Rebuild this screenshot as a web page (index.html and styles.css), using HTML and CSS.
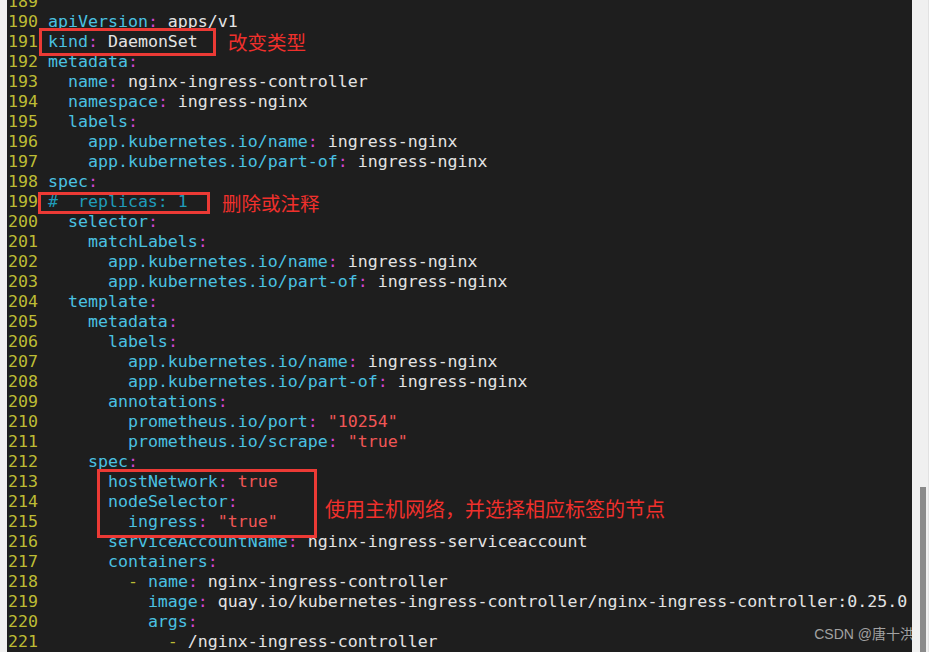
FILE: index.html
```html
<!DOCTYPE html>
<html lang="en">
<head>
    <meta charset="UTF-8">
    <title>nginx-ingress-controller</title>
    <link rel="stylesheet" href="styles.css">
</head>
<body>
<div class="window">
    <div class="edge"></div>
    <div class="editor">
        <div class="code">
            <div class="line"><span class="num">189 </span></div>
            <div class="line"><span class="num">190 </span><span class="k">apiVersion</span><span class="p">:</span> apps/v1</div>
            <div class="line"><span class="num">191 </span><span class="k">kind</span><span class="p">:</span> DaemonSet</div>
            <div class="line"><span class="num">192 </span><span class="k">metadata</span><span class="p">:</span></div>
            <div class="line"><span class="num">193 </span>  <span class="k">name</span><span class="p">:</span> nginx-ingress-controller</div>
            <div class="line"><span class="num">194 </span>  <span class="k">namespace</span><span class="p">:</span> ingress-nginx</div>
            <div class="line"><span class="num">195 </span>  <span class="k">labels</span><span class="p">:</span></div>
            <div class="line"><span class="num">196 </span>    <span class="k">app.kubernetes.io/name</span><span class="p">:</span> ingress-nginx</div>
            <div class="line"><span class="num">197 </span>    <span class="k">app.kubernetes.io/part-of</span><span class="p">:</span> ingress-nginx</div>
            <div class="line"><span class="num">198 </span><span class="k">spec</span><span class="p">:</span></div>
            <div class="line"><span class="num">199 </span><span class="c">#  replicas: 1</span></div>
            <div class="line"><span class="num">200 </span>  <span class="k">selector</span><span class="p">:</span></div>
            <div class="line"><span class="num">201 </span>    <span class="k">matchLabels</span><span class="p">:</span></div>
            <div class="line"><span class="num">202 </span>      <span class="k">app.kubernetes.io/name</span><span class="p">:</span> ingress-nginx</div>
            <div class="line"><span class="num">203 </span>      <span class="k">app.kubernetes.io/part-of</span><span class="p">:</span> ingress-nginx</div>
            <div class="line"><span class="num">204 </span>  <span class="k">template</span><span class="p">:</span></div>
            <div class="line"><span class="num">205 </span>    <span class="k">metadata</span><span class="p">:</span></div>
            <div class="line"><span class="num">206 </span>      <span class="k">labels</span><span class="p">:</span></div>
            <div class="line"><span class="num">207 </span>        <span class="k">app.kubernetes.io/name</span><span class="p">:</span> ingress-nginx</div>
            <div class="line"><span class="num">208 </span>        <span class="k">app.kubernetes.io/part-of</span><span class="p">:</span> ingress-nginx</div>
            <div class="line"><span class="num">209 </span>      <span class="k">annotations</span><span class="p">:</span></div>
            <div class="line"><span class="num">210 </span>        <span class="k">prometheus.io/port</span><span class="p">:</span> <span class="s">"10254"</span></div>
            <div class="line"><span class="num">211 </span>        <span class="k">prometheus.io/scrape</span><span class="p">:</span> <span class="s">"true"</span></div>
            <div class="line"><span class="num">212 </span>    <span class="k">spec</span><span class="p">:</span></div>
            <div class="line"><span class="num">213 </span>      <span class="k">hostNetwork</span><span class="p">:</span> <span class="s">true</span></div>
            <div class="line"><span class="num">214 </span>      <span class="k">nodeSelector</span><span class="p">:</span></div>
            <div class="line"><span class="num">215 </span>        <span class="k">ingress</span><span class="p">:</span> <span class="s">"true"</span></div>
            <div class="line"><span class="num">216 </span>      <span class="k">serviceAccountName</span><span class="p">:</span> nginx-ingress-serviceaccount</div>
            <div class="line"><span class="num">217 </span>      <span class="k">containers</span><span class="p">:</span></div>
            <div class="line"><span class="num">218 </span>        <span class="d">-</span> <span class="k">name</span><span class="p">:</span> nginx-ingress-controller</div>
            <div class="line"><span class="num">219 </span>          <span class="k">image</span><span class="p">:</span> quay.io/kubernetes-ingress-controller/nginx-ingress-controller:0.25.0</div>
            <div class="line"><span class="num">220 </span>          <span class="k">args</span><span class="p">:</span></div>
            <div class="line"><span class="num">221 </span>            <span class="d">-</span> /nginx-ingress-controller</div>
        </div>

        <!-- annotations drawn over the code -->
        <div class="mark mark-kind"></div>
        <div class="note note-kind">改变类型</div>
        <div class="mark mark-replicas"></div>
        <div class="note note-replicas">删除或注释</div>
        <div class="mark mark-host"></div>
        <div class="note note-host">使用主机网络，并选择相应标签的节点</div>
        <div class="watermark">CSDN @唐十洪</div>
    </div>
    <div class="scrollbar">
        <div class="thumb"></div>
    </div>
</div>
</body>
</html>
```

FILE: styles.css
```css
body,html{
    margin: 0;
    padding: 0;
    width: 100%;
    height: 100%;
    overflow: hidden;
    background-color: #1e1e1e;
}
.window{
    display: flex;
    width: 100%;
    height: 100%;
}
.edge{
    width: 7px;
    flex-shrink: 0;
    background-color: #f0f0f0;
}
.editor{
    flex: 1;
    position: relative;
    overflow: hidden;
    background-color: #1e1e1e;
    padding-left: 1px;
}
.code{
    margin-top: -8px;
    font-family: "DejaVu Sans Mono", "Liberation Mono", monospace;
    font-size: 16.6px;
    line-height: 20px;
    color: #e4e4e4;
}
.line{
    height: 20px;
    white-space: pre;
}
.num{
    color: #bdbc34;
}
.k{
    color: #4ac2e2;
}
.p{
    color: #d246d2;
}
.s{
    color: #f05656;
}
.c{
    color: #1f9cba;
}
.d{
    color: #bdbc34;
}
.mark{
    position: absolute;
    border: 3px solid #ec3a35;
    box-sizing: border-box;
}
.mark-kind{
    left: 32px;
    top: 28px;
    width: 177px;
    height: 28px;
}
.mark-replicas{
    left: 31px;
    top: 192px;
    width: 172px;
    height: 22px;
}
.mark-host{
    left: 90px;
    top: 469px;
    width: 220px;
    height: 69px;
}
.note{
    position: absolute;
    font-family: "Noto Sans CJK SC", sans-serif;
    font-size: 19.5px;
    line-height: 24px;
    color: #f0302c;
    white-space: nowrap;
}
.note-kind{
    left: 221px;
    top: 30px;
}
.note-replicas{
    left: 215px;
    top: 191px;
}
.note-host{
    left: 318px;
    top: 497px;
    font-size: 20px;
}
.watermark{
    position: absolute;
    right: -2px;
    top: 624px;
    font-family: "Liberation Sans", "Noto Sans CJK SC", sans-serif;
    font-size: 14px;
    line-height: 20px;
    color: #a2a2a2;
    white-space: nowrap;
}
.scrollbar{
    width: 17px;
    flex-shrink: 0;
    background-color: #f0f0f0;
    border-right: 1px solid #e2e2e2;
    box-sizing: border-box;
    padding-top: 487px;
    padding-left: 8px;
}
.thumb{
    width: 6px;
    height: 100%;
    background-color: #8a8a8a;
}
```
